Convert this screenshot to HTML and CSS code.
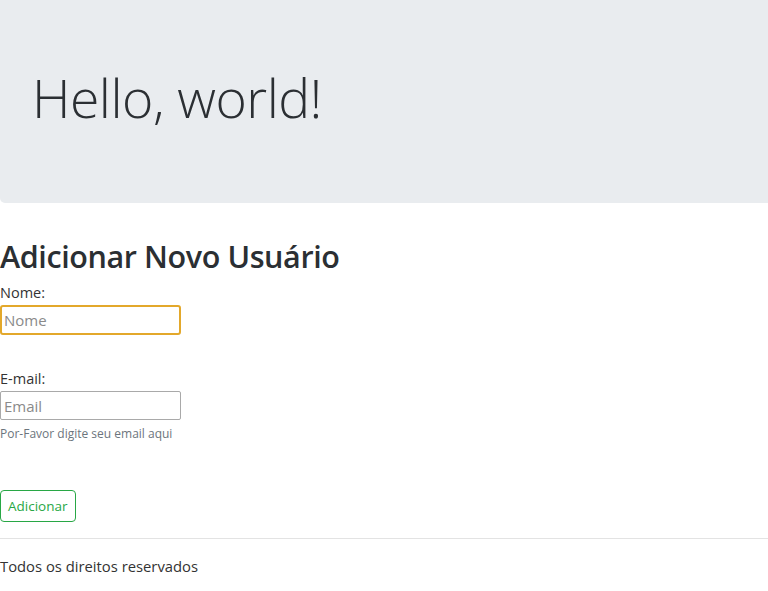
FILE: index.html
```html
<!DOCTYPE html>
<html lang="pt">
<head>
<meta charset="utf-8">
<title>Usuários</title>
<link rel="stylesheet" href="styles.css">
</head>
<body>
<header class="jumbotron">
  <h1 class="display">Hello, world!</h1>
</header>
<main class="content">
  <h2 class="title">Adicionar Novo Usuário</h2>
  <form class="user-form">
    <div class="field">
      <label class="label" for="nome">Nome:</label>
      <input class="input input-focus" id="nome" type="text" placeholder="Nome">
    </div>
    <div class="field field-email">
      <label class="label" for="email">E-mail:</label>
      <input class="input" id="email" type="email" placeholder="Email">
      <small class="help">Por-Favor digite seu email aqui</small>
    </div>
    <button class="btn" type="button">Adicionar</button>
  </form>
  <hr class="rule">
  <footer class="footer">Todos os direitos reservados</footer>
</main>
</body>
</html>
```
FILE: styles.css
```css
html, body {
  margin: 0;
  padding: 0;
  background: #fff;
}
body {
  font-family: "Open Sans", "Noto Sans", sans-serif;
  color: #212529;
  overflow: hidden;
}
.jumbotron {
  background: #e9ecef;
  padding: 64px 32px 0;
  height: 139px;
  border-radius: 0 0 0 5px;
}
.display {
  margin: 0;
  font-size: 53.5px;
  font-weight: 300;
  line-height: 67px;
  color: #2b2f33;
  letter-spacing: -0.5px;
}
.content {
  padding-top: 34px;
}
.title {
  margin: 0;
  font-size: 30.5px;
  font-weight: 600;
  line-height: 38px;
  color: #2b2f33;
  letter-spacing: -0.4px;
}
.user-form {
  display: flex;
  flex-direction: column;
  align-items: flex-start;
}
.field {
  display: flex;
  flex-direction: column;
  align-items: flex-start;
}
.label {
  font-size: 14.5px;
  line-height: 20px;
  color: #333;
  margin-top: 8px;
  margin-bottom: 2px;
}
.input {
  box-sizing: border-box;
  width: 181px;
  height: 29px;
  padding: 0 3px;
  font-family: inherit;
  font-size: 15px;
  border: 1px solid #a9a9a9;
  border-radius: 2px;
  outline: none;
  background: #fff;
}
.input::placeholder {
  color: #8a8a8a;
}
.input-focus {
  border: 2px solid #e3a82b;
  border-radius: 3px;
  padding-left: 2px;
  height: 30px;
}
.field-email {
  margin-top: 26px;
}
.help {
  font-size: 12px;
  line-height: 16px;
  color: #6c757d;
  margin-top: 6px;
}
.btn {
  margin-top: 48px;
  height: 32px;
  padding: 0 7px;
  font-family: inherit;
  font-size: 13.5px;
  color: #28a745;
  background: #fff;
  border: 1px solid #28a745;
  border-radius: 4px;
}
.rule {
  margin: 16px 0 0;
  border: 0;
  border-top: 1px solid #e3e3e3;
}
.footer {
  margin-top: 17px;
  font-size: 14.8px;
  line-height: 20px;
  color: #333;
}
```
